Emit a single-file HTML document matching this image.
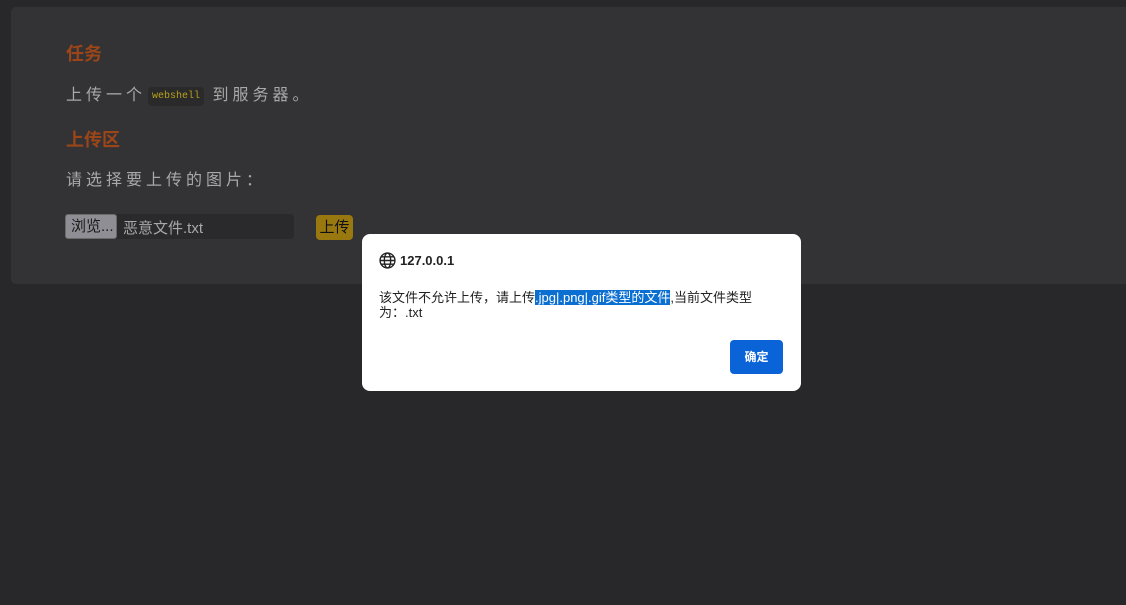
<!DOCTYPE html>
<html><head><meta charset="utf-8"><style>
*{margin:0;padding:0;box-sizing:border-box}
body{width:1126px;height:605px;background:#28282a;font-family:"Liberation Sans","Noto Sans CJK SC",sans-serif;position:relative;overflow:hidden}
.panel{position:absolute;left:11px;top:7px;width:1130px;height:277px;background:#333335;border-radius:5px}
.a{position:absolute;white-space:nowrap}
h{font-weight:bold;color:#9c4519;font-size:18px}
.t{color:#a8a8a8;font-size:16px;letter-spacing:4px}
.code{display:inline-block;background:#2a2a2a;color:#b8a21a;font-family:"Liberation Mono",monospace;font-size:10px;letter-spacing:0;padding:4px 4px;border-radius:4px;vertical-align:2px;margin-left:2px}
.dlg{position:absolute;left:362px;top:234px;width:439px;height:157px;background:#fff;border-radius:8px}
.sel{background:#0b6fd1;color:#fff}
</style></head><body>
<div class="panel"></div>
<div class="a" style="left:66px;top:40px"><h>任务</h></div>
<div class="a t" style="left:66px;top:81px">上传一个<span class="code">webshell</span> 到服务器。</div>
<div class="a" style="left:66px;top:126px"><h>上传区</h></div>
<div class="a t" style="left:66px;top:166px">请选择要上传的图片：</div>
<div class="a" style="left:65px;top:214px;width:229px;height:25px;background:#2a2a2c;border-radius:4px"></div>
<div class="a" style="left:65px;top:214px;width:52px;height:25px;background:#8f8e94;border:1px solid #6a6a6a;border-radius:3px;color:#1a1a1a;font-size:15px;line-height:23px;padding-left:5px">浏览...</div>
<div class="a" style="left:123px;top:217px;color:#a8a8a8;font-size:15px">恶意文件.txt</div>
<div class="a" style="left:316px;top:215px;width:37px;height:25px;background:#9a7810;border-radius:4px;color:#111;font-size:15px;line-height:25px;text-align:center">上传</div>
<div class="dlg">
<svg class="a" style="left:17px;top:18px" width="17" height="17" viewBox="0 0 16 16" fill="none" stroke="#222" stroke-width="1.3"><circle cx="8" cy="8" r="7"/><ellipse cx="8" cy="8" rx="3" ry="7"/><path d="M1 8h14M2 4.5h12M2 11.5h12"/></svg>
<div class="a" style="left:38px;top:19px;font-weight:bold;font-size:13px;color:#222">127.0.0.1</div>
<div class="a" style="left:17px;top:56px;font-size:13px;color:#222;line-height:15px">该文件不允许上传，请上传<span class="sel">.jpg|.png|.gif类型的文件</span>,当前文件类型<br>为：.txt</div>
<div class="a" style="left:368px;top:106px;width:53px;height:34px;background:#0b63d8;border-radius:4px;color:#fff;font-size:12px;font-weight:bold;line-height:34px;text-align:center">确定</div>
</div>
</body></html>
